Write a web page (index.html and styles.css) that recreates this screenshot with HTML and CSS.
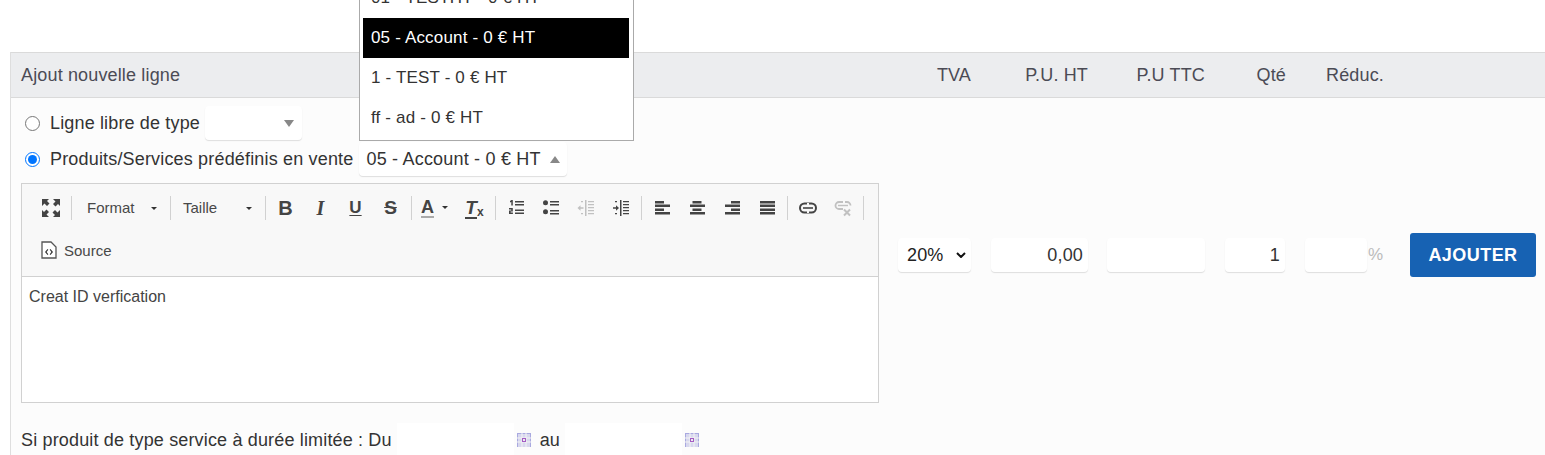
FILE: index.html
```html
<!DOCTYPE html>
<html lang="fr">
<head>
    <meta charset="UTF-8">
    <title>Ajout nouvelle ligne</title>
    <link rel="stylesheet" href="styles.css">
</head>
<body>
    <div class="page">
        <section class="panel">
            <header class="panel-head">
                <div class="head-title">Ajout nouvelle ligne</div>
                <div class="cols">
                    <div class="col col-tva">TVA</div>
                    <div class="col col-ht">P.U. HT</div>
                    <div class="col col-ttc">P.U TTC</div>
                    <div class="col col-qte">Qté</div>
                    <div class="col col-red">Réduc.</div>
                </div>
            </header>

            <div class="panel-body">
                <div class="type-row">
                    <input type="radio" name="ligne" class="radio">
                    <label class="type-label">Ligne libre de type</label>
                    <div class="combo combo-free"><span class="arrow-down"></span></div>
                </div>
                <div class="type-row type-row-second">
                    <input type="radio" name="ligne" class="radio" checked>
                    <label class="type-label">Produits/Services prédéfinis en vente</label>
                    <div class="combo combo-product">
                        <span class="combo-value">05 - Account - 0 € HT</span>
                        <span class="arrow-up"></span>
                    </div>
                </div>

                <div class="edit-row">
                    <div class="editor">
                        <div class="toolbar">
                            <div class="tb-row">
                                <span class="tb-btn">
                                    <svg class="ico" viewBox="0 0 18 18"><path d="M0 0h7L5 2l2.500 2.500L5 7 2.500 4.500 0 7zM18 0v7l-2-2-2.500 2.500L11 5l2.500-2.500L11 0zM0 18v-7l2 2 2.500-2.500L7 13l-2.500 2.500L7 18zM18 18h-7l2-2-2.500-2.500L13 11l2.500 2.500L18 11z"/></svg>
                                </span>
                                <span class="tb-sep"></span>
                                <span class="tb-combo tb-combo-format">Format<span class="tb-caret"></span></span>
                                <span class="tb-sep"></span>
                                <span class="tb-combo tb-combo-size">Taille<span class="tb-caret"></span></span>
                                <span class="tb-sep"></span>
                                <span class="tb-btn tb-letter tb-bold">B</span>
                                <span class="tb-btn tb-letter tb-italic">I</span>
                                <span class="tb-btn tb-letter tb-under">U</span>
                                <span class="tb-btn tb-letter tb-strike">S</span>
                                <span class="tb-sep"></span>
                                <span class="tb-btn tb-color"><span class="tb-color-a">A</span><span class="tb-caret tb-caret-small"></span></span>
                                <span class="tb-btn tb-letter tb-clear"><span class="tb-clear-t">T</span><small>x</small></span>
                                <span class="tb-sep"></span>
                                <span class="tb-btn">
                                    <svg class="ico" viewBox="0 0 18 18"><path d="M3 2l1.500-1h1.300v5.500H4.300V2.900L3 3.600zM2 9h3.800v3.400H3.600v1.100h2.300V15H2v-3.500h2.300v-1H2zM8 2h9v1.600H8zM8 5h9v1.600H8zM8 10.500h9v1.600H8zM8 13.500h9v1.600H8z"/></svg>
                                </span>
                                <span class="tb-btn">
                                    <svg class="ico" viewBox="0 0 18 18"><circle cx="3.500" cy="3.800" r="2.500"/><circle cx="3.500" cy="12.800" r="2.500"/><path d="M8 2h9v1.600H8zM8 5h9v1.600H8zM8 11h9v1.600H8zM8 14h9v1.600H8z"/></svg>
                                </span>
                                <span class="tb-btn tb-off">
                                    <svg class="ico" viewBox="0 0 18 18"><path d="M8 1h1.500v16H8zM11 2h6v1.200h-6zM11 5h6v1.200h-6zM11 8h6v1.200h-6zM11 11h6v1.200h-6zM11 14h6v1.200h-6zM6.500 8.300v1.400H3.500v2L.5 9l3-2.700v2zM4 2h2v1.200H4zM4 14h2v1.200H4z"/></svg>
                                </span>
                                <span class="tb-btn">
                                    <svg class="ico" viewBox="0 0 18 18"><path d="M8 1h1.500v16H8zM11 2h6v1.200h-6zM11 5h6v1.200h-6zM11 8h6v1.200h-6zM11 11h6v1.200h-6zM11 14h6v1.200h-6zM1 8.300h3v-2L7 9l-3 2.700v-2H1zM3 2h2v1.200H3zM3 14h2v1.200H3z"/></svg>
                                </span>
                                <span class="tb-sep"></span>
                                <span class="tb-btn">
                                    <svg class="ico" viewBox="0 0 18 18"><path d="M2 2h9v2.500H2zM2 5.500h15V8H2zM2 9.500h9V12H2zM2 13h15v2.500H2z"/></svg>
                                </span>
                                <span class="tb-btn">
                                    <svg class="ico" viewBox="0 0 18 18"><path d="M4.500 2h9v2.500h-9zM2 5.500h15V8H2zM4.500 9.500h9V12h-9zM2 13h15v2.500H2z"/></svg>
                                </span>
                                <span class="tb-btn">
                                    <svg class="ico" viewBox="0 0 18 18"><path d="M8 2h9v2.500H8zM2 5.500h15V8H2zM8 9.500h9V12H8zM2 13h15v2.500H2z"/></svg>
                                </span>
                                <span class="tb-btn">
                                    <svg class="ico" viewBox="0 0 18 18"><path d="M2 2h15v2.500H2zM2 5.500h15V8H2zM2 9.500h15V12H2zM2 13h15v2.500H2z"/></svg>
                                </span>
                                <span class="tb-sep"></span>
                                <span class="tb-btn">
                                    <svg class="ico" viewBox="0 0 18 18"><rect x="1" y="4.500" width="16" height="9" rx="4.500" fill="none" stroke="#444" stroke-width="2"/><path d="M4 8.200h10v1.600H4z"/><path d="M8 4h2v3H8zM8 11h2v3H8z" fill="#f8f8f8"/></svg>
                                </span>
                                <span class="tb-btn tb-off">
                                    <svg class="ico" viewBox="0 0 18 18"><path fill="none" stroke="#444" stroke-width="1.800" d="M9 3H5a3.500 3.500 0 0 0 0 7h4M11 3h2a3.500 3.500 0 0 1 3.500 3.500"/><path d="M4 5.800h10v1.400H4z"/><path fill="none" stroke="#444" stroke-width="2" d="M10 10.500l6 6M16 10.500l-6 6"/></svg>
                                </span>
                                <span class="tb-sep"></span>
                            </div>
                            <div class="tb-row">
                                <span class="tb-source">
                                    <svg class="ico-src" viewBox="0 0 16 18"><path fill="#fff" stroke="#555" stroke-width="1.300" d="M1 1h9l5 5v11H1z"/><path d="M6.500 8L4 11l2.500 3 .8-.8L5.600 11l1.700-2.200zM9.500 8L12 11l-2.500 3-.8-.8 1.700-2.200-1.700-2.200z" fill="#333"/></svg>
                                    Source
                                </span>
                            </div>
                        </div>
                        <div class="editor-text">Creat ID verfication</div>
                    </div>

                    <div class="line-fields">
                        <div class="field field-tva">20%<svg class="chev" viewBox="0 0 10 6"><path d="M1 1l4 4 4-4" fill="none" stroke="#111" stroke-width="2"/></svg></div>
                        <div class="field field-ht">0,00</div>
                        <div class="field field-ttc"></div>
                        <div class="field field-qte">1</div>
                        <div class="field field-red"></div>
                        <span class="percent">%</span>
                        <button class="btn-add">AJOUTER</button>
                    </div>
                </div>

                <div class="date-row">
                    <span class="date-label">Si produit de type service à durée limitée : Du</span>
                    <div class="date-input"></div>
                    <svg class="cal" viewBox="0 0 14 14"><rect width="14" height="14" fill="#d8d8ee"/><path d="M0 .5h14M.5 0v14M13.500 0v14" stroke="#a9a9e0" fill="none"/><path d="M0 5h14M0 9h14M5 0v14M9 0v14" stroke="#f4f4f4"/><rect x="5" y="5" width="4" height="4" fill="#a45cc4"/><rect x="6" y="6" width="2" height="2" fill="#eee"/></svg>
                    <span class="date-au">au</span>
                    <div class="date-input"></div>
                    <svg class="cal" viewBox="0 0 14 14"><rect width="14" height="14" fill="#d8d8ee"/><path d="M0 .5h14M.5 0v14M13.500 0v14" stroke="#a9a9e0" fill="none"/><path d="M0 5h14M0 9h14M5 0v14M9 0v14" stroke="#f4f4f4"/><rect x="5" y="5" width="4" height="4" fill="#a45cc4"/><rect x="6" y="6" width="2" height="2" fill="#eee"/></svg>
                </div>
            </div>
        </section>

        <div class="dropdown">
            <div class="dd-item">01 - TESTHT - 0 € HT</div>
            <div class="dd-item dd-selected">05 - Account - 0 € HT</div>
            <div class="dd-item">1 - TEST - 0 € HT</div>
            <div class="dd-item">ff - ad - 0 € HT</div>
        </div>
    </div>
</body>
</html>
```

FILE: styles.css
```css
* {
    box-sizing: border-box;
}

html, body {
    margin: 0;
    height: 455px;
    overflow: hidden;
    background: #fff;
}

body {
    font-family: "Liberation Sans", Arial, sans-serif;
    font-size: 18px;
    letter-spacing: 0.15px;
    color: #333;
}

.page {
    position: relative;
    height: 455px;
    padding: 52px 0 0 10px;
    overflow: hidden;
}

.panel {
    background: #fcfcfc;
    border-left: 1px solid #dedede;
    height: 403px;
}

/* header */
.panel-head {
    display: flex;
    align-items: center;
    height: 46px;
    padding-left: 10px;
    background: #ecedef;
    border-top: 1px solid #dadada;
    border-bottom: 1px solid #dadada;
    color: #4b4b55;
}

.head-title {
    width: 877px;
}

.cols {
    display: flex;
    gap: 19px;
}

.col {
    text-align: right;
}

.col-tva { width: 73px; }
.col-ht { width: 98px; }
.col-ttc { width: 98px; }
.col-qte { width: 62px; }
.col-red { width: 79px; }

/* type rows */
.panel-body {
    padding: 8px 0 0 10px;
}

.type-row {
    display: flex;
    align-items: center;
    height: 34px;
}

.type-row-second {
    margin-top: 2px;
}

.type-row-second .type-label {
    letter-spacing: 0.17px;
}

.radio {
    width: 15px;
    height: 15px;
    margin: 0 10px 0 4px;
    flex: none;
}

.combo {
    display: flex;
    align-items: center;
    height: 34px;
    background: #fff;
    border-radius: 4px;
    box-shadow: 0 1px 1px rgba(0,0,0,0.12);
}

.combo-free {
    width: 97px;
    margin-left: 5px;
    justify-content: flex-end;
    padding-right: 8px;
}

.combo-product {
    width: 208px;
    margin-left: 6px;
    padding-left: 7px;
    color: #333;
}

.combo-value {
    width: 184px;
    white-space: nowrap;
    letter-spacing: 0.2px;
}

.arrow-down {
    border-left: 5.500px solid transparent;
    border-right: 5.500px solid transparent;
    border-top: 7px solid #888;
}

.arrow-up {
    border-left: 5.500px solid transparent;
    border-right: 5.500px solid transparent;
    border-bottom: 7px solid #888;
}

/* dropdown, open over the panel */
.dropdown {
    position: absolute;
    left: 359px;
    top: 0;
    width: 275px;
    height: 141px;
    padding: 0 4px 2px 3px;
    display: flex;
    flex-direction: column;
    justify-content: flex-end;
    overflow: hidden;
    background: #fff;
    border: 1px solid #aaa;
    border-top: 0;
    font-size: 17px;
    letter-spacing: 0.17px;
}

.dd-item {
    flex: none;
    height: 40px;
    line-height: 40px;
    padding-left: 8px;
    color: #333;
}

.dd-selected {
    background: #000;
    color: #fff;
}

/* editor */
.edit-row {
    display: flex;
    margin-top: 7px;
}

.editor {
    width: 858px;
    height: 220px;
    flex: none;
    border: 1px solid #d1d1d1;
    background: #fff;
}

.toolbar {
    height: 93px;
    padding: 3px 0 0 11px;
    background: #f8f8f8;
    border-bottom: 1px solid #d1d1d1;
}

.tb-row {
    display: flex;
    align-items: center;
    height: 42px;
}

.tb-btn {
    display: flex;
    align-items: center;
    justify-content: center;
    width: 35px;
    height: 24px;
    flex: none;
}

.tb-off {
    opacity: 0.3;
}

.tb-sep {
    width: 1px;
    height: 24px;
    margin: 0 2px 0 3px;
    background: #d1d1d1;
    flex: none;
}

.ico {
    width: 18px;
    height: 18px;
    fill: #444;
}

.tb-combo {
    position: relative;
    height: 24px;
    line-height: 24px;
    font-size: 15px;
    letter-spacing: 0;
    color: #484848;
    flex: none;
}

.tb-combo-format {
    width: 93px;
    padding-left: 13px;
}

.tb-combo-size {
    width: 89px;
    padding-left: 10px;
}

.tb-caret {
    position: absolute;
    top: 11px;
    right: 10px;
    border-left: 3px solid transparent;
    border-right: 3px solid transparent;
    border-top: 3px solid #333;
}

.tb-letter {
    font-size: 20px;
    letter-spacing: 0;
    color: #444;
    font-weight: bold;
}

.tb-italic {
    font-family: "Liberation Serif", serif;
    font-style: italic;
}

.tb-under {
    text-decoration: underline;
    text-underline-offset: 2px;
    font-size: 17px;
}

.tb-strike {
    text-decoration: line-through;
    font-size: 19px;
}

.tb-color {
    position: relative;
    width: 43px;
    justify-content: flex-start;
    padding-left: 7px;
}

.tb-color-a {
    font-size: 18px;
    font-weight: bold;
    line-height: 18px;
    color: #444;
    border-bottom: 2px solid #aaa;
}

.tb-caret-small {
    top: 10px;
    right: 9px;
}

.tb-clear-t {
    font-style: italic;
    font-size: 19px;
    line-height: 19px;
    border-bottom: 2px solid #444;
}

.tb-clear small {
    font-size: 12px;
    margin-top: 8px;
}

.tb-source {
    display: flex;
    align-items: center;
    gap: 7px;
    font-size: 15px;
    letter-spacing: 0;
    color: #484848;
    padding-left: 8px;
}

.ico-src {
    width: 16px;
    height: 18px;
}

.editor-text {
    padding: 10px 7px;
    font-size: 16px;
    line-height: 19px;
    letter-spacing: 0;
    color: #444;
}

/* line fields next to the editor */
.line-fields {
    display: flex;
    align-items: center;
    height: 44px;
    margin: 50px 0 0 19px;
}

.field {
    height: 34px;
    line-height: 34px;
    background: #fff;
    border-radius: 4px;
    box-shadow: 0 1px 1px rgba(0,0,0,0.12);
    text-align: right;
    padding-right: 5px;
    flex: none;
    color: #333;
}

.field-tva {
    display: flex;
    align-items: center;
    justify-content: space-between;
    width: 73px;
    padding: 0 5px 0 9px;
    margin-right: 20px;
    color: #222;
}

.chev {
    width: 10px;
    height: 6px;
}

.field-ht { width: 97px; margin-right: 19px; }
.field-ttc { width: 98px; margin-right: 20px; }
.field-qte { width: 60px; margin-right: 20px; }
.field-red { width: 62px; }

.percent {
    width: 43px;
    padding-left: 1px;
    color: #bbb;
    font-size: 17px;
}

.btn-add {
    width: 126px;
    height: 44px;
    padding: 0;
    border: 0;
    border-radius: 3px;
    background: #1762b3;
    color: #fff;
    font-family: inherit;
    font-size: 18px;
    letter-spacing: 0.45px;
    font-weight: bold;
    flex: none;
}

/* date row */
.date-row {
    display: flex;
    align-items: center;
    height: 34px;
    margin-top: 20px;
}

.date-label {
    letter-spacing: 0.16px;
}

.date-input {
    width: 117px;
    height: 34px;
    margin-left: 5px;
    background: #fff;
}

.cal {
    width: 14px;
    height: 14px;
    margin-left: 3px;
}

.date-au {
    margin-left: 9px;
}
```
